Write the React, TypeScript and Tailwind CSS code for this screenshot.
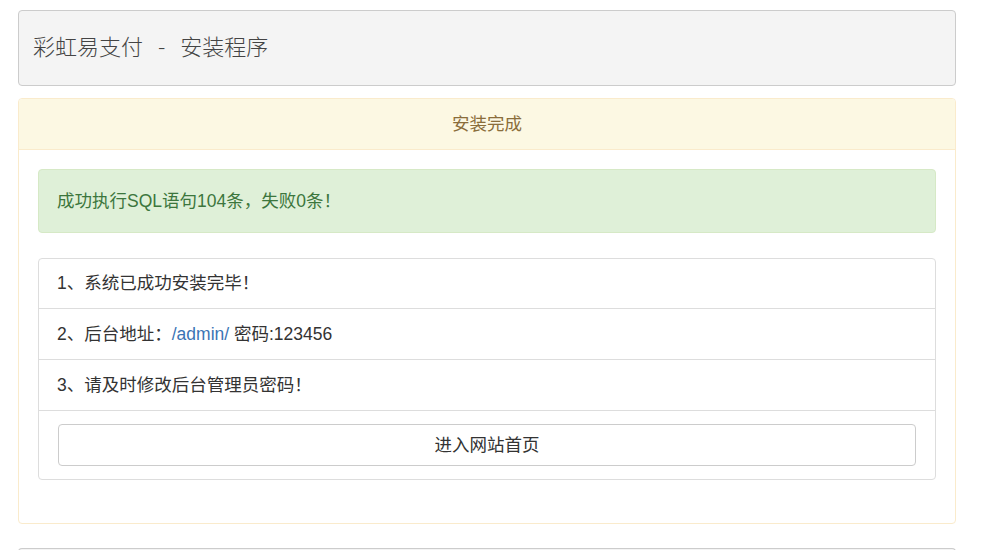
export default function App() {
  const font = { fontFamily: '"Liberation Sans", Arial, "Noto Sans CJK SC", sans-serif' };
  return (
    <div className="min-h-[550px] bg-white text-[#333] overflow-hidden" style={font}>
      <div className="ml-[18px] w-[938px] pt-[10px]">
        <div className="h-[76px] rounded-[4px] border border-[#ccc] bg-[#f4f4f4] px-[14px] pb-[6px] flex items-center">
          <h3 className="text-[22px] text-[#444] font-light" style={{ fontFamily: '"Noto Sans CJK SC", serif' }}>
            彩虹易支付<span className="mx-[15px]">-</span>安装程序
          </h3>
        </div>

        <div className="mt-[12px] h-[426px] rounded-[4px] border border-[#faebcc] bg-white">
          <div className="h-[51px] border-b border-[#faebcc] bg-[#fcf8e3] text-[#8a6d3b] text-[17.5px] flex items-center justify-center rounded-t-[4px]">
            安装完成
          </div>
          <div className="px-[19px] pt-[19px]">
            <div className="h-[64px] rounded-[4px] border border-[#d6e9c6] bg-[#dff0d8] text-[#3c763d] text-[17.5px] px-[18px] flex items-center">
              成功执行SQL语句104条，失败0条！
            </div>

            <ul className="mt-[25px] rounded-[4px] border border-[#ddd] text-[17.5px]">
              <li className="h-[50px] px-[18px] flex items-center border-b border-[#ddd]">1、系统已成功安装完毕！</li>
              <li className="h-[51px] px-[18px] flex items-center border-b border-[#ddd]">
                2、后台地址：<a className="text-[#3a74b5]">/admin/</a>&nbsp;密码:123456
              </li>
              <li className="h-[51px] px-[18px] flex items-center border-b border-[#ddd]">3、请及时修改后台管理员密码！</li>
              <li className="h-[68px] px-[19px] pt-[13px]">
                <button className="w-full h-[42px] rounded-[4px] border border-[#ccc] bg-white text-[17.5px] text-[#333]">
                  进入网站首页
                </button>
              </li>
            </ul>
          </div>
        </div>

        <div className="mt-[24px] h-[20px] rounded-t-[4px] border-t border-x border-[#ccc] bg-[#f4f4f4]" />
      </div>
    </div>
  );
}
